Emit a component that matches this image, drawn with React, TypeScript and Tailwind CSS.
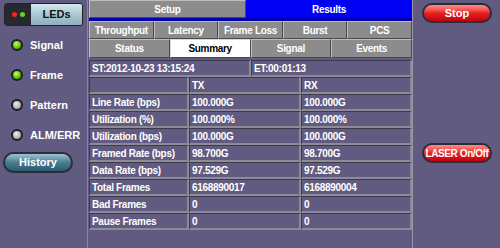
import React from 'react'

const font = { fontFamily: '"Liberation Sans", Arial, sans-serif' }

function Led({ color, label }: { color: 'green' | 'gray'; label: string }) {
  return (
    <div className="flex items-center gap-[7px] pl-[11px] h-[30px]">
      <span
        className={`w-[12px] h-[12px] rounded-full border-2 border-[#1e1e28] ${
          color === 'green'
            ? 'bg-[radial-gradient(circle_at_40%_35%,#c8ff60,#5cc000_60%,#2f7a00)]'
            : 'bg-[radial-gradient(circle_at_40%_35%,#f0f0f0,#b4b4b4_60%,#7a7a7a)]'
        }`}
      />
      <span className="text-white font-bold text-[11px] tracking-normal">{label}</span>
    </div>
  )
}

function Tab({ label, active }: { label: string; active?: boolean }) {
  return (
    <div
      className={`flex-1 flex items-center justify-center h-full border border-[#4a4a4a] ${
        active
          ? 'bg-white text-black border-t-[#d8d8d8] border-l-[#d8d8d8]'
          : 'bg-[#8c8c8c] text-white border-t-[#bdbdbd] border-l-[#bdbdbd]'
      }`}
    >
      {label}
    </div>
  )
}

const rows: [string, string, string][] = [
  ['', 'TX', 'RX'],
  ['Line Rate (bps)', '100.000G', '100.000G'],
  ['Utilization (%)', '100.000%', '100.000%'],
  ['Utilization (bps)', '100.000G', '100.000G'],
  ['Framed Rate (bps)', '98.700G', '98.700G'],
  ['Data Rate (bps)', '97.529G', '97.529G'],
  ['Total Frames', '6168890017', '6168890004'],
  ['Bad Frames', '0', '0'],
  ['Pause Frames', '0', '0'],
]

const cell =
  'h-full flex items-center pl-[2px] border-t border-l border-t-[#3c3a4c] border-l-[#3c3a4c] border-b-2 border-r-2 border-b-[#8d8c96] border-r-[#8d8c96]'

const redBtn =
  'w-[70px] h-[20px] rounded-full border-2 border-[#2a2e3a] bg-gradient-to-b from-[#ff8a8a] via-[#e82020] to-[#c00010] flex items-center justify-center text-white whitespace-nowrap'

export default function App() {
  return (
    <div
      className="w-[500px] h-[248px] bg-[#615b82] flex overflow-hidden text-[10px] tracking-[-0.3px] font-bold"
      style={font}
    >
      {/* left sidebar */}
      <div className="w-[87px] shrink-0 flex flex-col">
        <div className="mt-[3px] ml-[4px] w-[79px] h-[23px] rounded-[3px] border border-[#222] flex overflow-hidden">
          <div className="w-[26px] bg-[#262a30] flex items-center justify-center gap-[3px]">
            <span className="w-[5px] h-[5px] rounded-full bg-[#ff2020]" />
            <span className="w-[5px] h-[5px] rounded-full bg-[#6ed020]" />
          </div>
          <div className="flex-1 bg-gradient-to-b from-[#d4e8ee] via-[#a9c8d2] to-[#8fb0bc] flex items-center justify-center text-[11px] text-[#111] tracking-normal">
            LEDs
          </div>
        </div>
        <div className="mt-[4px] flex flex-col">
          <Led color="green" label="Signal" />
          <Led color="green" label="Frame" />
          <Led color="gray" label="Pattern" />
          <Led color="gray" label="ALM/ERR" />
        </div>
        <div className="mt-[2px] ml-[3px] w-[70px] h-[21px] rounded-full border-2 border-[#2a2e3a] bg-gradient-to-b from-[#9cc4d4] via-[#4a7d92] to-[#2c5a6c] flex items-center justify-center text-white text-[11px] tracking-normal">
          History
        </div>
      </div>

      {/* main panel */}
      <div className="w-[325px] shrink-0 flex flex-col pl-[1px] border-l border-[#8a8899]">
        <div className="h-[18px] flex">
          <div className="w-[157px] h-full bg-[#8c8c8c] text-white border border-[#4a4a4a] border-t-[#bdbdbd] border-l-[#bdbdbd] flex items-center justify-center">
            Setup
          </div>
          <div className="flex-1 h-full bg-[#0000f4] text-white flex items-center justify-center">Results</div>
        </div>
        <div className="h-[3px] bg-[#0000b0]" />
        <div className="h-[18px] flex">
          <Tab label="Throughput" />
          <Tab label="Latency" />
          <Tab label="Frame Loss" />
          <Tab label="Burst" />
          <Tab label="PCS" />
        </div>
        <div className="h-[19px] flex">
          <Tab label="Status" />
          <Tab label="Summary" active />
          <Tab label="Signal" />
          <Tab label="Events" />
        </div>
        <div className="h-[2px]" />
        <div className="h-[17px] flex text-white">
          <div className={`${cell} w-[162px]`}>ST:2012-10-23 13:15:24</div>
          <div className={`${cell} flex-1`}>ET:00:01:13</div>
        </div>
        {rows.map(([a, b, c], i) => (
          <div key={i} className="h-[17px] flex text-white">
            <div className={`${cell} w-[100px]`}>{a}</div>
            <div className={`${cell} w-[112px]`}>{b}</div>
            <div className={`${cell} flex-1`}>{c}</div>
          </div>
        ))}
      </div>

      {/* right sidebar */}
      <div className="flex-1 flex flex-col items-center border-l border-[#9a98aa] pl-[1px]">
        <div className={`${redBtn} mt-[3px] text-[11px] tracking-normal`}>Stop</div>
        <div className={`${redBtn} mt-[120px] text-[10px] tracking-[-0.4px]`}>LASER On/Off</div>
      </div>
    </div>
  )
}
